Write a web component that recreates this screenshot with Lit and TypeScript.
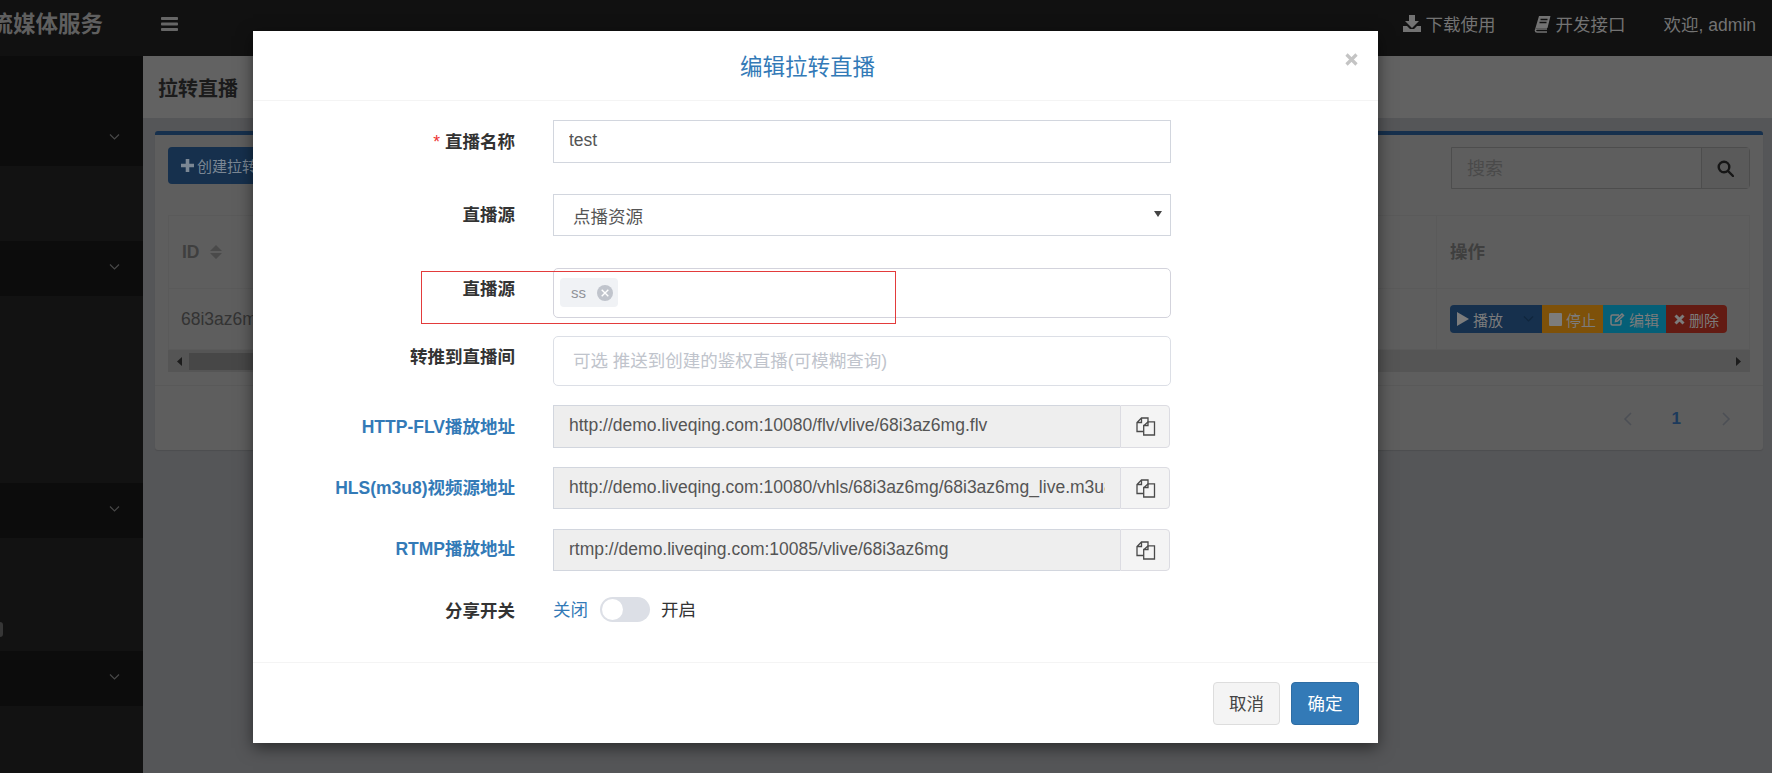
import { LitElement, html, css, svg } from "lit";
import { customElement } from "lit/decorators.js";

const chevron = svg`<path d="M1 1.5 L5.5 6 L10 1.5" fill="none" stroke="currentColor" stroke-width="1.2"/>`;
const copyIcon = html`<svg class="copy" width="20" height="19" viewBox="0 0 20 19"><path d="M7.500 14.500 H1 V5.500 L5.500 1 H12 V5.500 M5.500 1.500 V5.500 H1.500" fill="none" stroke="currentColor" stroke-width="1.300"/><path d="M8 8.500 L12 4.800 H18.500 V18 H7.700 V8.500 H12 V5" fill="none" stroke="currentColor" stroke-width="1.300"/></svg>`;

@customElement("app-root")
export class AppRoot extends LitElement {
  static styles = css`
    :host {
      display: block;
      width: 1772px;
      height: 773px;
      position: relative;
      overflow: hidden;
      background: #555658;
      font-family: "Liberation Sans", "Noto Sans CJK SC", sans-serif;
      font-size: 17.5px;
      color: #333;
    }
    * { box-sizing: border-box; }
    svg { display: block; flex: none; }

    .topbar { height: 56px; background: #111; display: flex; align-items: center; color: #737373; padding-bottom: 9px; }
    .logo { width: 143px; height: 47px; display: flex; justify-content: flex-end; align-items: center; overflow: hidden; padding: 0 40px 3px 0; font-size: 22.5px; font-weight: 700; color: #5f5f5f; white-space: nowrap; flex: none; }
    .bars { margin-left: 18px; color: #666; }
    .nav { margin-left: auto; display: flex; align-items: center; padding-right: 16px; }
    .nav-item { display: flex; align-items: center; gap: 5px; white-space: nowrap; }
    .nav-item.n2 { margin-left: 38px; }
    .nav-item.n3 { margin-left: 38px; }

    .main { display: flex; height: 717px; }
    .sidebar { width: 143px; flex: none; background: #121212; display: flex; flex-direction: column; position: relative; }
    .sec { display: flex; justify-content: flex-end; align-items: flex-end; background: #0c0c0c; color: #474747; padding: 0 23px 25px 0; flex: none; }
    .gap { flex: none; display: flex; align-items: flex-end; }
    .pill { width: 3px; height: 15px; background: #363636; border-radius: 0 3px 3px 0; margin-bottom: 14px; }

    .content { flex: 1; min-width: 0; }
    .page-head { height: 62px; background: #626262; display: flex; align-items: center; padding-left: 15px; font-size: 20px; font-weight: 700; color: #1b1b1b; }
    .box { margin: 13px 9px 0 12px; height: 319px; background: #5e5e5e; border-top: 4px solid #16304d; border-radius: 3px; padding: 12px 13px 0; box-shadow: 0 1px 1px rgba(0,0,0,.1); }
    .toolbar { display: flex; justify-content: space-between; height: 42px; }
    .create { height: 37px; width: 180px; background: #16304d; color: #7b8794; border-radius: 4px; display: flex; align-items: center; gap: 3px; padding-left: 13px; font-size: 15px; white-space: nowrap; overflow: hidden; }
    .search { width: 299px; height: 42px; display: flex; border: 1px solid #4d4d4d; border-radius: 0 4px 4px 0; }
    .search-text { flex: 1; display: flex; align-items: center; padding: 0 0 2px 15px; font-size: 18px; color: #4a4a4a; }
    .search-btn { width: 48px; background: #5a5a5a; border-left: 1px solid #4d4d4d; display: flex; align-items: center; justify-content: center; color: #161616; }

    .table { margin-top: 26px; border: 1px solid #5a5a5a; display: grid; grid-template-columns: 1fr 313px; }
    .th { height: 73px; display: flex; align-items: center; padding: 0 0 0 13px; font-weight: 700; color: #3f3f3f; gap: 10px; border-bottom: 1px solid #5a5a5a; }
    .th.op { padding-bottom: 3px; }
    .td { height: 60px; display: flex; align-items: center; padding-left: 12px; color: #333; }
    .td.op { padding-left: 13px; }
    .op { border-left: 1px solid #5a5a5a; }
    .ops { display: flex; height: 28px; font-size: 15px; color: #7c7c7c; border-radius: 4px; overflow: hidden; }
    .ops > span { display: flex; align-items: center; justify-content: center; gap: 4px; }
    .o1 { width: 92px; background: #16304d; justify-content: flex-start !important; padding-left: 7px; position: relative; gap: 4px; }
    .o1 .cv { margin-left: 16px; color: #10263d; }
    .o2 { width: 61px; background: #7e5109; }
    .o3 { width: 63px; background: #055f77; }
    .o4 { width: 61px; background: #631b13; }
    .scroll { height: 22px; background: #555; display: flex; align-items: center; justify-content: space-between; padding: 0 9px; color: #1c1c1c; }
    .thumb { flex: 1; height: 17px; background: #474747; margin: 0 1190px 0 7px; }
    .foot { margin: 13px -13px 0; border-top: 1px solid #595959; display: flex; justify-content: flex-end; align-items: center; height: 66px; padding-right: 32px; color: #4c4f55; }
    .pg { font-weight: 700; color: #1c3a5c; margin: 0 41px 0 40px; font-size: 17px; }

    .modal { position: absolute; left: 253px; top: 31px; width: 1125px; height: 712px; background: #fff; display: flex; flex-direction: column; box-shadow: 0 5px 15px rgba(0,0,0,.5); }
    .m-head { height: 70px; flex: none; border-bottom: 1px solid #f4f4f4; display: flex; align-items: center; justify-content: center; padding: 0 16px 2px 0; font-size: 22.5px; color: #337ab7; position: relative; }
    .close { position: absolute; right: 20px; top: 22px; color: #c4c4c4; }
    .m-body { flex: 1; padding-top: 19px; display: flex; flex-direction: column; }
    .row { display: flex; align-items: center; flex: none; }
    .lab { width: 262px; margin-right: 38px; padding-bottom: 3px; text-align: right; font-weight: 700; color: #333; flex: none; white-space: nowrap; }
    .lab.link { color: #337ab7; }
    .lab.plain { padding-bottom: 0; }
    .lab.tight { padding-bottom: 5px; }
    .star { color: #e33; font-weight: 400; margin-right: 5px; }
    .row.top { align-items: flex-start; }
    .row.top .lab { padding-top: 7px; }
    .field { width: 618px; flex: none; font: inherit; color: #555; }
    input.field { height: 100%; border: 1px solid #d2d6de; padding: 0 15px 2px; outline: none; background: #fff; }
    .sel { position: relative; height: 100%; width: 618px; flex: none; }
    .sel::after { content: ""; position: absolute; right: 9px; top: 17px; border: 4px solid transparent; border-top: 6px solid #444; border-bottom: 0; pointer-events: none; }
    select.field { height: 100%; appearance: none; border: 1px solid #d2d6de; padding: 4px 10px 0 19px; background: #fff; outline: none; border-radius: 0; }
    .tags { height: 100%; border: 1px solid #d3d3dc; border-radius: 5px; padding: 9px 6px; display: flex; align-items: flex-start; }
    .tag { height: 29px; width: 58px; background: #f0f2f5; border-radius: 4px; display: flex; align-items: center; padding-left: 11px; gap: 11px; font-size: 15px; color: #909399; }
    .tag-x { width: 16px; height: 16px; border-radius: 50%; background: #c0c4cc; display: flex; align-items: center; justify-content: center; color: #fff; }
    input.el { border: 1px solid #dcdfe6; border-radius: 5px; padding: 0 19px; }
    input.el::placeholder { color: #c0c4cc; opacity: 1; }
    .group { width: 617px; height: 100%; display: flex; flex: none; }
    .group input { flex: 1; min-width: 0; height: 100%; font: inherit; color: #555; background: #eee; border: 1px solid #d2d6de; border-right: none; padding: 0 15px 2px; outline: none; }
    .addon { width: 50px; flex: none; background: #f4f4f4; border: 1px solid #dcdce2; border-radius: 0 4px 4px 0; display: flex; align-items: center; justify-content: center; padding-left: 1px; color: #4a4a4a; }
    .switch-row { display: flex; align-items: center; padding-bottom: 2px; }
    .off { color: #337ab7; }
    .sw { width: 50px; height: 25px; background: #dcdfe6; border-radius: 13px; margin: 2px 11px 0 12px; padding: 2px; flex: none; }
    .knob { display: block; width: 21px; height: 21px; background: #fff; border-radius: 50%; }
    .on { color: #333; }
    .m-foot { height: 81px; flex: none; border-top: 1px solid #f4f4f4; display: flex; justify-content: flex-end; align-items: flex-start; padding: 19px 19px 0 0; gap: 11px; }
    .btn { height: 43px; width: 67px; border-radius: 4px; display: flex; align-items: center; justify-content: center; font: inherit; border: 1px solid #ddd; background: #f4f4f4; color: #444; padding: 0 0 3px; }
    .btn.primary { width: 68px; background: #337ab7; border-color: #2e6da4; color: #fff; }
    .mark { position: absolute; left: 168px; top: 240px; width: 475px; height: 53px; border: 1px solid #e33b3b; pointer-events: none; }
  `;

  render() {
    return html`
      <header class="topbar">
        <div class="logo"><span>流媒体服务</span></div>
        <svg class="bars" width="17" height="14" viewBox="0 0 17 14" fill="currentColor"><rect width="17" height="3" rx=".8"/><rect y="5.500" width="17" height="3" rx=".8"/><rect y="11" width="17" height="3" rx=".8"/></svg>
        <nav class="nav">
          <span class="nav-item"><svg width="18" height="17" viewBox="0 0 18 17" fill="currentColor"><path d="M6 0h6v6h4l-7 7-7-7h4z"/><path d="M0 11h4l3 3h4l3-3h4v6H0z"/></svg>下载使用</span>
          <span class="nav-item n2"><svg width="17" height="18" viewBox="0 0 17 18"><path d="M5 1h11.500l-3 12H3l-2 1.500z" fill="currentColor"/><path d="M6.500 4.500h7M5.500 7.500h7" stroke="#111" stroke-width="1.300"/><path d="M13 14H3.200c-2.400 0-2.400 3 0 3H13" fill="none" stroke="currentColor" stroke-width="1.500"/></svg>开发接口</span>
          <span class="nav-item n3">欢迎, admin</span>
        </nav>
      </header>
      <div class="main">
        <aside class="sidebar">
          <div class="sec" style="height:110px"><svg width="11" height="8" viewBox="0 0 11 8">${chevron}</svg></div>
          <div class="gap" style="height:75px"></div>
          <div class="sec" style="height:55px"><svg width="11" height="8" viewBox="0 0 11 8">${chevron}</svg></div>
          <div class="gap" style="height:187px"></div>
          <div class="sec" style="height:55px"><svg width="11" height="8" viewBox="0 0 11 8">${chevron}</svg></div>
          <div class="gap" style="height:113px"><span class="pill"></span></div>
          <div class="sec" style="height:55px"><svg width="11" height="8" viewBox="0 0 11 8">${chevron}</svg></div>
        </aside>
        <main class="content">
          <div class="page-head">拉转直播</div>
          <section class="box">
            <div class="toolbar">
              <div class="create"><svg width="13" height="13" viewBox="0 0 13 13" fill="currentColor"><path d="M4.700 0h3.600v4.700H13v3.600H8.300V13H4.700V8.300H0V4.700h4.700z"/></svg>创建拉转直播</div>
              <div class="search">
                <div class="search-text">搜索</div>
                <div class="search-btn"><svg width="17" height="17" viewBox="0 0 17 17" fill="none" stroke="currentColor" stroke-width="2.400"><circle cx="7" cy="7" r="5.300"/><path d="M11 11l5 5" stroke-linecap="round"/></svg></div>
              </div>
            </div>
            <div class="table">
              <div class="th">ID <svg width="12" height="14" viewBox="0 0 12 14" fill="#4a4a4a"><path d="M6 0l6 6H0zM0 8h12l-6 6z"/></svg></div>
              <div class="th op">操作</div>
              <div class="td">68i3az6mg</div>
              <div class="td op">
                <div class="ops">
                  <span class="o1"><svg width="12" height="14" viewBox="0 0 12 14" fill="currentColor"><path d="M0 0l12 7-12 7z"/></svg>播放<svg class="cv" width="11" height="8" viewBox="0 0 11 8">${chevron}</svg></span>
                  <span class="o2"><svg width="13" height="13" viewBox="0 0 13 13" fill="currentColor"><rect width="13" height="13" rx="1"/></svg>停止</span>
                  <span class="o3"><svg width="15" height="13" viewBox="0 0 15 13" fill="none" stroke="currentColor" stroke-width="1.500"><path d="M9 2H2.500A1.500 1.500 0 0 0 1 3.500v7A1.500 1.500 0 0 0 2.500 12h7a1.500 1.500 0 0 0 1.500-1.500V7"/><path d="M5.500 8.500l.5-2 6-5.500 1.500 1.500-6 5.500z"/></svg>编辑</span>
                  <span class="o4"><svg width="11" height="11" viewBox="0 0 11 11" fill="none" stroke="currentColor" stroke-width="3"><path d="M1.500 1.500l8 8M9.500 1.500l-8 8"/></svg>删除</span>
                </div>
              </div>
            </div>
            <div class="scroll">
              <svg width="5" height="9" viewBox="0 0 5 9" fill="#1c1c1c"><path d="M5 0v9L0 4.500z"/></svg>
              <span class="thumb"></span>
              <svg width="5" height="9" viewBox="0 0 5 9" fill="#1c1c1c"><path d="M0 0v9l5-4.500z"/></svg>
            </div>
            <div class="foot">
              <svg width="9" height="14" viewBox="0 0 9 14" fill="none" stroke="currentColor" stroke-width="1.500"><path d="M8 1L2 7l6 6"/></svg>
              <span class="pg">1</span>
              <svg width="9" height="14" viewBox="0 0 9 14" fill="none" stroke="currentColor" stroke-width="1.500"><path d="M1 1l6 6-6 6"/></svg>
            </div>
          </section>
        </main>
      </div>

      <div class="modal">
        <div class="m-head">编辑拉转直播
          <svg class="close" width="13" height="13" viewBox="0 0 13 13" fill="none" stroke="currentColor" stroke-width="3.200"><path d="M1.500 1.500l10 10M11.500 1.500l-10 10"/></svg>
        </div>
        <div class="m-body">
          <div class="row" style="height:43px;margin-bottom:31px"><div class="lab"><span class="star">*</span>直播名称</div><input class="field" .value=${"test"} /></div>
          <div class="row" style="height:42px;margin-bottom:32px"><div class="lab">直播源</div><div class="sel"><select class="field"><option>点播资源</option></select></div></div>
          <div class="row top" style="height:50px;margin-bottom:18px"><div class="lab">直播源</div><div class="field tags"><span class="tag">ss<span class="tag-x"><svg width="8" height="8" viewBox="0 0 8 8" fill="none" stroke="currentColor" stroke-width="1.400"><path d="M.7.7l6.600 6.600M7.300.7L.7 7.300"/></svg></span></span></div></div>
          <div class="row top" style="height:50px;margin-bottom:19px"><div class="lab">转推到直播间</div><input class="field el" placeholder="可选 推送到创建的鉴权直播(可模糊查询)" /></div>
          <div class="row" style="height:43px;margin-bottom:19px"><div class="lab link">HTTP-FLV播放地址</div><div class="group"><input readonly .value=${"http://demo.liveqing.com:10080/flv/vlive/68i3az6mg.flv"} /><span class="addon">${copyIcon}</span></div></div>
          <div class="row" style="height:42px;margin-bottom:20px"><div class="lab link">HLS(m3u8)视频源地址</div><div class="group"><input readonly .value=${"http://demo.liveqing.com:10080/vhls/68i3az6mg/68i3az6mg_live.m3u8"} /><span class="addon">${copyIcon}</span></div></div>
          <div class="row" style="height:42px;margin-bottom:26px"><div class="lab link tight">RTMP播放地址</div><div class="group"><input readonly .value=${"rtmp://demo.liveqing.com:10085/vlive/68i3az6mg"} /><span class="addon">${copyIcon}</span></div></div>
          <div class="row" style="height:25px"><div class="lab plain">分享开关</div><div class="switch-row"><span class="off">关闭</span><span class="sw"><span class="knob"></span></span><span class="on">开启</span></div></div>
        </div>
        <div class="m-foot">
          <button class="btn">取消</button>
          <button class="btn primary">确定</button>
        </div>
        <div class="mark"></div>
      </div>
    `;
  }
}
